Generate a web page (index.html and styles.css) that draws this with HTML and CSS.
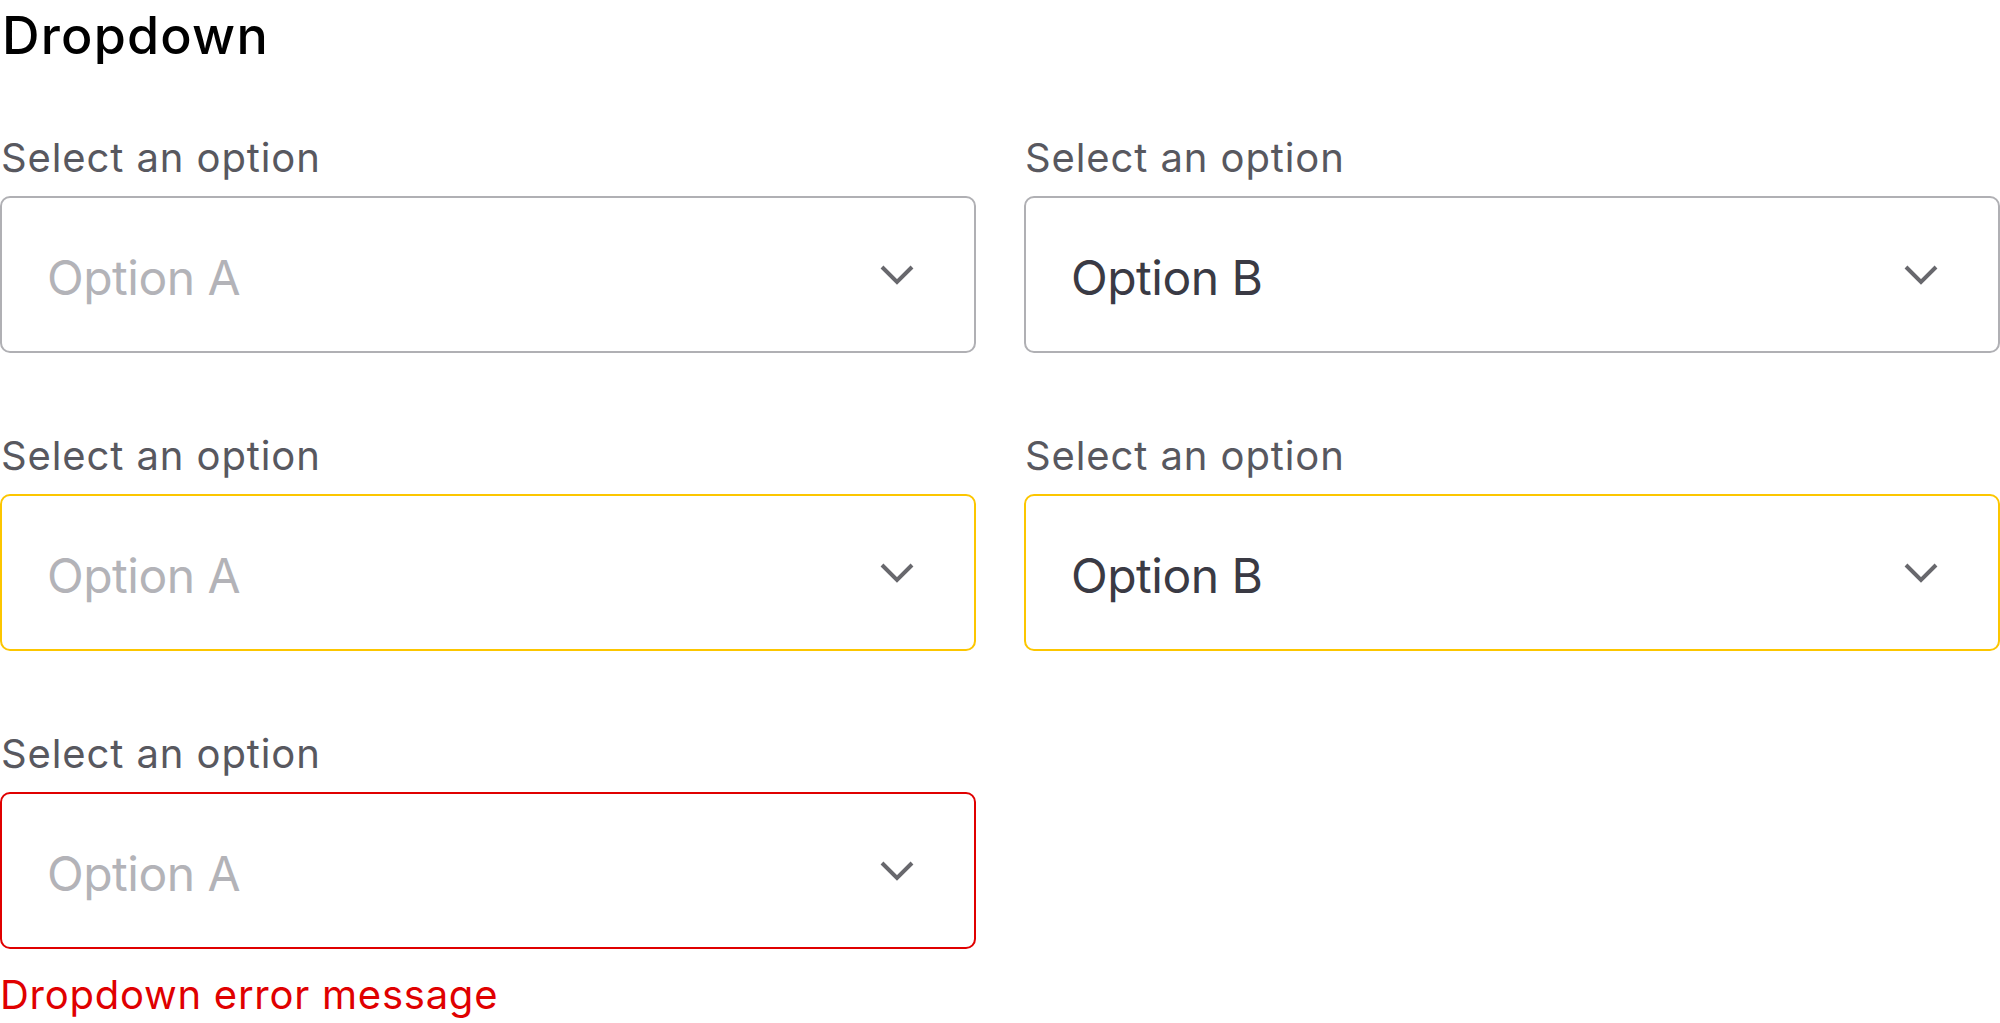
FILE: index.html
```html
<!DOCTYPE html>
<html lang="en">
<head>
<meta charset="utf-8">
<title>Dropdown</title>
<link rel="stylesheet" href="styles.css">
</head>
<body>
<main class="page">
  <h1 class="title">Dropdown</h1>
  <div class="grid">
    <div class="field">
      <label class="label">Select an option</label>
      <div class="select select--default">
        <span class="value value--placeholder">Option A</span>
        <svg class="chevron" viewBox="0 0 34 20" width="34" height="20" aria-hidden="true"><polyline points="2,2 17,17 32,2"/></svg>
      </div>
    </div>
    <div class="field">
      <label class="label">Select an option</label>
      <div class="select select--default">
        <span class="value">Option B</span>
        <svg class="chevron" viewBox="0 0 34 20" width="34" height="20" aria-hidden="true"><polyline points="2,2 17,17 32,2"/></svg>
      </div>
    </div>
    <div class="field">
      <label class="label">Select an option</label>
      <div class="select select--focus">
        <span class="value value--placeholder">Option A</span>
        <svg class="chevron" viewBox="0 0 34 20" width="34" height="20" aria-hidden="true"><polyline points="2,2 17,17 32,2"/></svg>
      </div>
    </div>
    <div class="field">
      <label class="label">Select an option</label>
      <div class="select select--focus">
        <span class="value">Option B</span>
        <svg class="chevron" viewBox="0 0 34 20" width="34" height="20" aria-hidden="true"><polyline points="2,2 17,17 32,2"/></svg>
      </div>
    </div>
    <div class="field">
      <label class="label">Select an option</label>
      <div class="select select--error">
        <span class="value value--placeholder">Option A</span>
        <svg class="chevron" viewBox="0 0 34 20" width="34" height="20" aria-hidden="true"><polyline points="2,2 17,17 32,2"/></svg>
      </div>
      <p class="error">Dropdown error message</p>
    </div>
  </div>
</main>
</body>
</html>
```

FILE: styles.css
```css
* { box-sizing: border-box; }

html, body {
  margin: 0;
  padding: 0;
  background: #ffffff;
}

body {
  font-family: Inter, "Noto Sans", "Liberation Sans", sans-serif;
  color: #000;
}

.page {
  width: 2000px;
  padding-top: 5px;
}

.title {
  margin: 0 0 0 2px;
  font-size: 52px;
  line-height: 62px;
  font-weight: 500;
  color: #000;
  letter-spacing: 1.2px;
}

.grid {
  display: grid;
  grid-template-columns: 976px 976px;
  column-gap: 48px;
  row-gap: 79px;
  margin-top: 67px;
}

.field {
  display: flex;
  flex-direction: column;
}

.label {
  display: block;
  margin: 0 0 14px 1px;
  font-size: 40px;
  line-height: 48px;
  color: #58585f;
  letter-spacing: 0.9px;
}

.select {
  height: 157px;
  border: 2px solid #b0b0b4;
  border-radius: 10px;
  display: flex;
  align-items: center;
  justify-content: space-between;
  padding: 6px 60px 0 45px;
  background: #fff;
}

.select--focus { border-color: #fcc600; }
.select--error { border-color: #e00000; }

.value {
  font-size: 48px;
  line-height: 58px;
  color: #3a3a44;
  letter-spacing: -0.5px;
}

.value--placeholder { color: #b3b3b8; }

.chevron {
  display: block;
  margin-top: -6px;
  fill: none;
  stroke: #68686d;
  stroke-width: 4;
}

.error {
  margin: 22px 0 0 0;
  font-size: 40px;
  line-height: 48px;
  color: #e00000;
  letter-spacing: 0.75px;
}
```
